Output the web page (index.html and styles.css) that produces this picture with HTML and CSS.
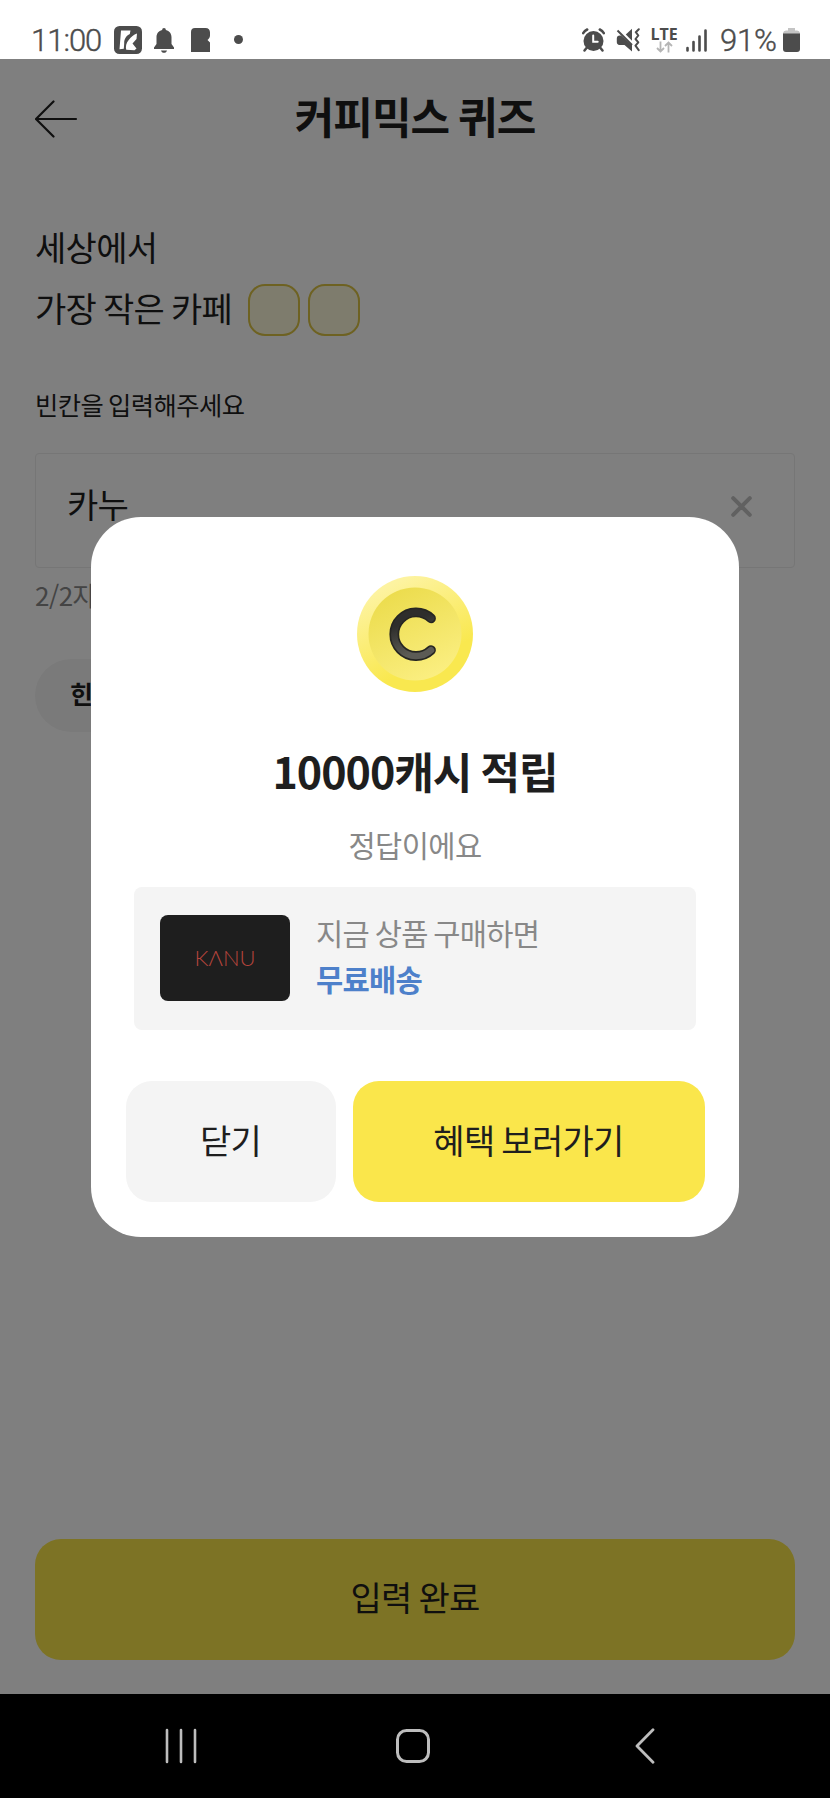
FILE: index.html
```html
<!DOCTYPE html>
<html lang="ko">
<head>
<meta charset="utf-8">
<title>커피믹스 퀴즈</title>
<link rel="stylesheet" href="styles.css">
</head>
<body>
<div class="phone">
  <div class="status">
    <span class="time">11:00</span>
    <svg class="ic-k" width="28" height="28" viewBox="0 0 28 28"><rect width="28" height="28" rx="5.5" fill="#4c4c4c"/><path d="M7 4.500h9.500l-.7 3.500c-3.500 1.500-5.800 5-5.600 9.500l-.4 5.200-4.300.6z" fill="#fff"/><path d="M23 7.500l-.5 5.500-4 4.500 4 5-2 1.800-8.300-.6c-.8-3.500 0-6.700 2.500-9.700 2.500-3.300 5-5.500 8.300-6.500z" fill="#fff"/></svg>
    <svg class="ic-bell" width="20" height="26" viewBox="0 0 20 26"><path d="M10 0a2 2 0 0 1 1.900 2c3.500.8 5.600 3.500 5.600 7.200V16l2.500 3.600V21H0v-1.400L2.500 16V9.200C2.500 5.500 4.600 2.800 8.100 2A2 2 0 0 1 10 0zM7 22.500h6c-.5 1.500-1.500 2.300-3 2.300s-2.500-.8-3-2.300z" fill="#4c4c4c"/></svg>
    <svg class="ic-b" width="19" height="24" viewBox="0 0 19 24"><path d="M4 0h10.500C17.500 0 19 2 19 4.500v3c0 2-1 3-2.500 4.500L19 14.500V24H0V4a4 4 0 0 1 4-4z" fill="#4c4c4c"/></svg>
    <i class="dot"></i>
    <span class="grow"></span>
    <svg class="ic-alarm" width="23" height="24" viewBox="0 0 23 24"><circle cx="11.500" cy="13" r="10" fill="#4c4c4c"/><path d="M1.200 5.200a9 9 0 0 1 4-3.700M21.800 5.200a9 9 0 0 0-4-3.700M4.500 20l-2 2.500M18.500 20l2 2.500" stroke="#4c4c4c" stroke-width="2.500" stroke-linecap="round" fill="none"/><path d="M11.200 7.500v6.300h4.500" stroke="#fff" stroke-width="2" fill="none" stroke-linecap="round"/></svg>
    <svg class="ic-mute" width="24" height="24" viewBox="0 0 24 24"><path d="M16 1v22.500L8.500 17H3.500A3 3 0 0 1 .8 14v-3.500a3 3 0 0 1 3-3H5l11 9.800z" fill="#4c4c4c"/><path d="M9.800 6.500L16 .8v12z" fill="#4c4c4c"/><path d="M1.500 2.500L16 17" stroke="#4c4c4c" stroke-width="2" fill="none"/><path d="M22.800 1.200l-3 3 2.500 3.300-2.800 3.500 2.800 3.300-2.800 3.400 3.200 4.500" stroke="#4c4c4c" stroke-width="2" fill="none" stroke-linejoin="round" stroke-linecap="round"/></svg>
    <span class="lte"><b>LTE</b><svg width="17" height="12" viewBox="0 0 17 12"><path d="M4.500.5v10M1 7l3.500 3.500L8 7M12.500 11.500v-10M9 5l3.500-3.500L16 5" stroke="#b5b5b5" stroke-width="1.800" fill="none"/></svg></span>
    <svg class="ic-sig" width="22" height="23" viewBox="0 0 22 23"><path d="M1.500 19v2.500M7.500 13v8.500M13.500 7.500v14M19.500 1.500v20" stroke="#4c4c4c" stroke-width="2.600" stroke-linecap="round"/></svg>
    <span class="pct">91%</span>
    <svg class="ic-bat" width="17" height="24" viewBox="0 0 17 24"><path d="M5 0h7v2.500h2A3 3 0 0 1 17 5v3H0V5a3 3 0 0 1 3-2.500h2z" fill="#c4c4c4"/><path d="M0 5.500h17V21a3 3 0 0 1-3 3H3a3 3 0 0 1-3-3z" fill="#4c4c4c"/></svg>
  </div>

  <main class="screen">
    <header class="header">
      <svg class="back" width="43" height="38" viewBox="0 0 43 38"><path d="M18.500 1.500L1 19l17.500 17.500M1 19H41" fill="none" stroke="#1e1e1e" stroke-width="2.200" stroke-linecap="round" stroke-linejoin="round"/></svg>
      <h1>커피믹스 퀴즈</h1>
    </header>
    <section class="quiz">
      <p class="line">세상에서</p>
      <p class="line second">가장 작은 카페<i class="blank"></i><i class="blank"></i></p>
      <p class="label">빈칸을 입력해주세요</p>
      <div class="field"><span>카누</span><svg width="21" height="21" viewBox="0 0 21 21"><path d="M2.200 2.200l16.600 16.600M18.800 2.200L2.200 18.800" stroke="#c2c2c2" stroke-width="4" stroke-linecap="round"/></svg></div>
      <p class="count">2/2자</p>
      <div class="chip">힌트보기</div>
    </section>
    <div class="submit">입력 완료</div>

    <div class="overlay">
      <div class="modal">
        <svg class="coin" width="120" height="120" viewBox="0 0 120 120">
          <defs>
            <linearGradient id="rim" x1=".2" y1="0" x2=".7" y2="1"><stop offset=".1" stop-color="#fdf3a0"/><stop offset=".75" stop-color="#f9e84f"/></linearGradient>
            <linearGradient id="face" x1=".2" y1="0" x2=".7" y2="1"><stop offset="0" stop-color="#ebdb4a"/><stop offset="1" stop-color="#fbef82"/></linearGradient>
            <linearGradient id="ink" x1="0" y1="0" x2=".3" y2="1"><stop offset=".3" stop-color="#2e2e2c"/><stop offset="1" stop-color="#5c5b55"/></linearGradient>
          </defs>
          <circle cx="60" cy="60" r="58" fill="url(#rim)"/>
          <circle cx="60" cy="60" r="46.500" fill="url(#face)"/>
          <path d="M76 44.300A21.800 21.800 0 1 0 76 76.100" fill="none" stroke="#262622" stroke-width="9.800" stroke-linecap="round"/>
          <path d="M76 44.300A21.800 21.800 0 1 0 76 76.100" fill="none" stroke="url(#ink)" stroke-width="6.500" stroke-linecap="round"/>
        </svg>
        <h2>10000캐시 적립</h2>
        <p class="sub">정답이에요</p>
        <div class="offer">
          <div class="thumb">KΛNU</div>
          <div class="copy"><p>지금 상품 구매하면</p><p class="free">무료배송</p></div>
        </div>
        <div class="actions"><div class="btn close">닫기</div><div class="btn go">혜택 보러가기</div></div>
      </div>
    </div>
  </main>

  <nav class="nav">
    <svg width="32" height="36" viewBox="0 0 32 36"><path d="M2 2v32M16 2v32M30 2v32" stroke="#bdbdbd" stroke-width="2.600" stroke-linecap="round"/></svg>
    <svg class="home" width="36" height="36" viewBox="0 0 36 36"><rect x="2.500" y="2.500" width="31" height="31" rx="9" fill="none" stroke="#bdbdbd" stroke-width="3"/></svg>
    <svg class="prev" width="20" height="36" viewBox="0 0 20 36"><path d="M18 1.800L2 18l16 16.200" fill="none" stroke="#bdbdbd" stroke-width="2.800" stroke-linecap="round" stroke-linejoin="round"/></svg>
  </nav>
</div>
</body>
</html>
```

FILE: styles.css
```css
* { box-sizing: border-box; margin: 0; padding: 0; }
body { background: #fff; font-family: "Noto Sans CJK KR", sans-serif; color: #1e1e1e; word-spacing: -2px; }
svg { display: block; flex: none; }
i { display: block; }
.phone { width: 830px; height: 1798px; display: flex; flex-direction: column; overflow: hidden; }

.status { height: 59px; flex: none; display: flex; align-items: flex-start; padding: 26px 30px 0 31px; color: #4c4c4c; }
.grow { flex: 1; }
.time, .pct { font: 300 31px/31px Roboto, sans-serif; white-space: nowrap; -webkit-text-stroke: 0.4px #4c4c4c; position: relative; top: -1px; }
.time { width: 83px; letter-spacing: -1px; }
.pct { width: 63px; letter-spacing: -0.2px; }
.ic-bell { margin: 2px 0 0 12px; }
.ic-b { margin: 2px 0 0 17px; }
.dot { width: 9px; height: 9px; border-radius: 50%; background: #4c4c4c; margin: 9px 0 0 24px; }
.ic-alarm { margin-top: 2px; }
.ic-mute { margin: 2px 0 0 11px; }
.lte { width: 26px; margin: 1px 9px 0 11px; display: flex; flex-direction: column; align-items: center; }
.lte b { font: 700 16px/14px "Open Sans", sans-serif; }
.ic-sig { margin: 3px 12px 0 0; }
.ic-bat { margin-top: 2px; }

.screen { position: relative; height: 1635px; flex: none; display: flex; flex-direction: column; }
.header { height: 120px; flex: none; display: grid; grid-template-columns: 100px 1fr 100px; align-items: center; }
.back { margin-left: 35px; }
h1 { font-size: 43px; line-height: 60px; letter-spacing: -1px; text-align: center; padding-bottom: 9px; }
.quiz { padding: 38px 35px 0; flex: 1; }
.line { font-size: 34px; line-height: 60px; height: 60px; letter-spacing: -0.7px; }
.second { display: flex; line-height: 61px; }
.blank { width: 52px; height: 52px; border: 2px solid #dcc444; border-radius: 17px; background: #fcf8da; margin: 7px 8px 0 0; }
.blank:first-of-type { margin-left: 16px; }
.label { margin-top: 52px; font-size: 25.3px; line-height: 30px; letter-spacing: -0.5px; }
.field { margin-top: 34px; height: 115px; border: 1px solid #ececec; border-radius: 4px; display: flex; justify-content: space-between; align-items: center; padding: 0 42px 8px 31px; font-size: 34px; line-height: 50px; letter-spacing: -0.7px; }
.field span { padding-bottom: 6px; }
.count { margin-top: 12px; font-size: 26px; line-height: 30px; letter-spacing: -0.5px; color: #888; }
.chip { margin-top: 49px; width: 170px; height: 73px; border-radius: 37px; background: #f4f4f4; padding: 19px 0 0 35px; font-size: 25px; line-height: 30px; font-weight: 700; letter-spacing: -0.5px; }
.submit { margin: 0 35px 34px; height: 121px; flex: none; border-radius: 26px; background: #fae64b; text-align: center; font-size: 34px; line-height: 116px; letter-spacing: -0.7px; }

.overlay { position: absolute; inset: 0; background: rgba(0, 0, 0, 0.5); display: flex; justify-content: center; align-items: center; }
.modal { width: 648px; height: 720px; border-radius: 50px; background: #fff; display: flex; flex-direction: column; align-items: center; padding-top: 57px; }
h2 { margin-top: 46px; font-size: 43px; line-height: 61px; letter-spacing: -1px; }
.sub { margin-top: 24px; font-size: 29.6px; line-height: 40px; letter-spacing: -0.6px; color: #888; }
.offer { margin-top: 22px; width: 562px; height: 143px; border-radius: 8px; background: #f4f4f4; display: flex; align-items: center; padding-left: 26px; }
.thumb { width: 130px; height: 86px; border-radius: 8px; background: #1e1e1e; color: #b5443c; font: 300 22px/86px Lato, sans-serif; text-align: center; }
.copy { margin-left: 26px; font-size: 29.6px; line-height: 46px; letter-spacing: -0.7px; color: #888; padding-bottom: 5px; }
.free { color: #4d80ca; font-weight: 700; }
.actions { margin-top: 51px; display: flex; gap: 17px; }
.btn { height: 121px; border-radius: 26px; text-align: center; font-size: 34px; line-height: 117px; letter-spacing: -0.7px; }
.close { width: 210px; background: #f4f4f4; }
.go { width: 352px; background: #fae64b; }

.nav { height: 104px; flex: none; background: #000; display: flex; align-items: center; padding-left: 165px; }
.home { margin-left: 198px; }
.prev { margin-left: 204px; }
```
